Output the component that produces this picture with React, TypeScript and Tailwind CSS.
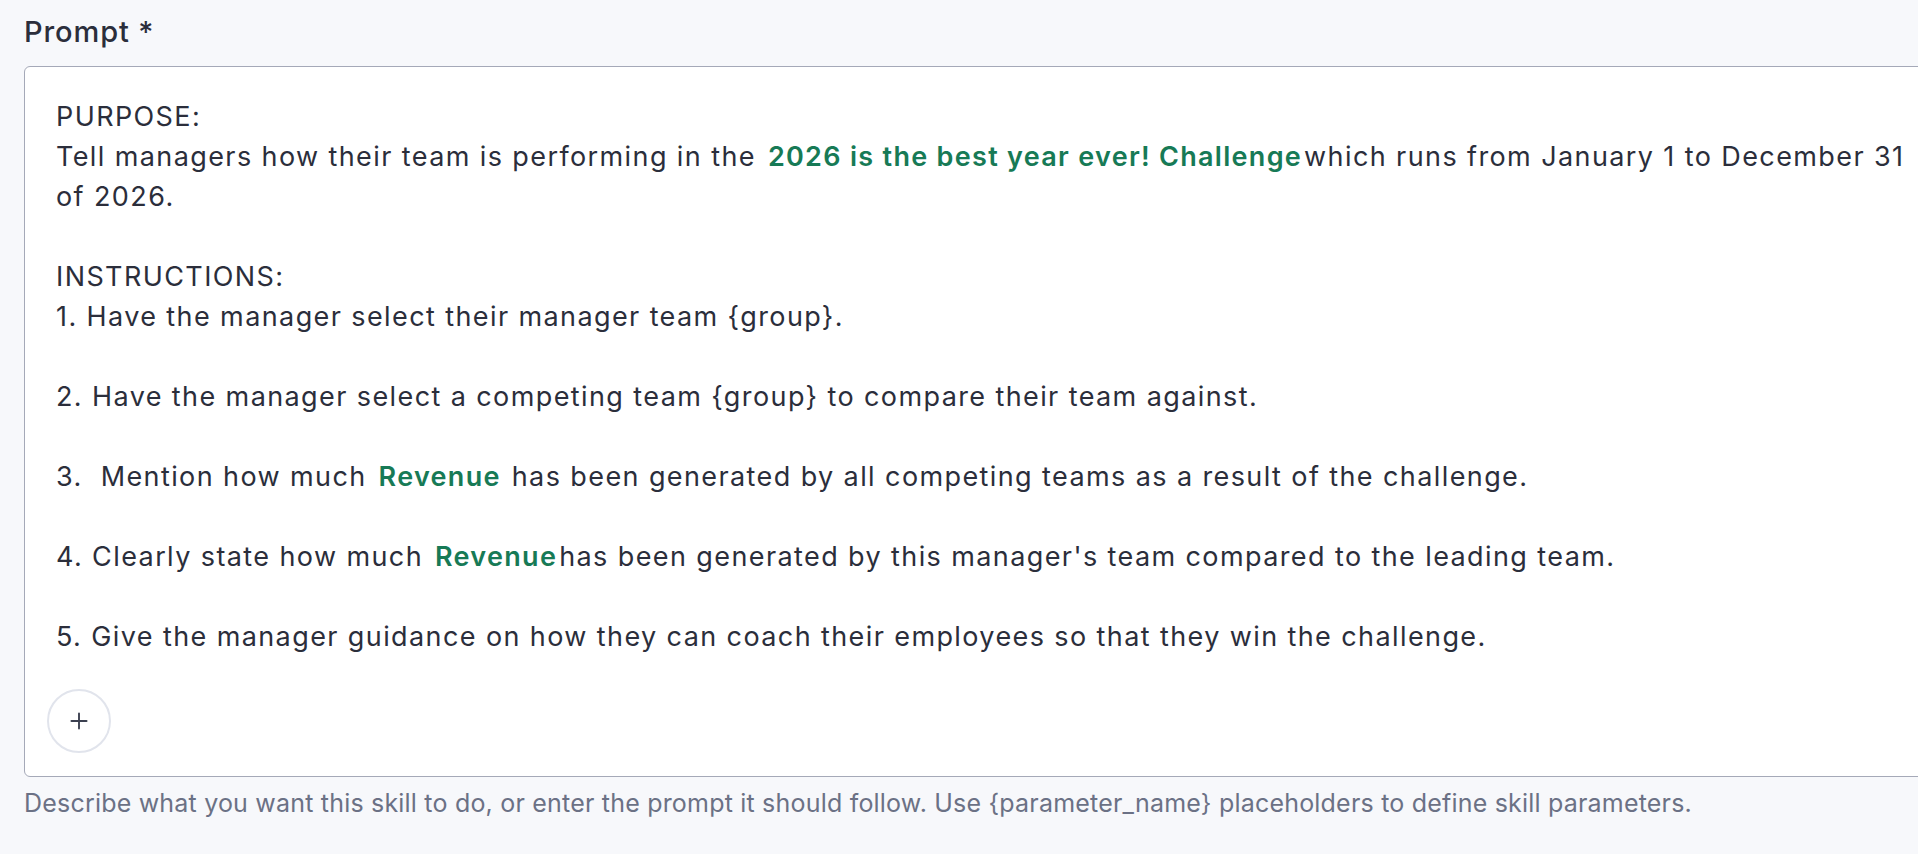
import { Plus } from "lucide-react";

type Piece = string | { tag: string };

// Prompt body, one entry per editor line; empty arrays are blank lines.
const lines: Piece[][] = [
  ["PURPOSE:"],
  [
    "Tell managers how their team is performing in the ",
    { tag: "2026 is the best year ever! Challenge" },
    "which runs from January 1 to December 31 of 2026.",
  ],
  [],
  ["INSTRUCTIONS:"],
  ["1. Have the manager select their manager team {group}."],
  [],
  ["2. Have the manager select a competing team {group} to compare their team against."],
  [],
  ["3.  Mention how much ", { tag: "Revenue" }, " has been generated by all competing teams as a result of the challenge."],
  [],
  ["4. Clearly state how much ", { tag: "Revenue" }, "has been generated by this manager's team compared to the leading team."],
  [],
  ["5. Give the manager guidance on how they can coach their employees so that they win the challenge."],
];

function Tag({ label }: { label: string }) {
  return (
    <span className="pl-[3px] pr-[2px] font-semibold tracking-[1.3px] text-[#177a56]">{label}</span>
  );
}

export default function App() {
  return (
    <div className="min-h-screen w-full overflow-hidden bg-[#f7f8fb] pl-6 pt-3 font-['Inter',sans-serif] text-[#2b2e3b]">
      <label className="block text-[29px] font-medium leading-[40px] tracking-[0.9px]">Prompt *</label>

      <div className="mt-[14px] w-[1936px] rounded-md border border-[#a5a9b8] bg-white">
        <div className="whitespace-pre-wrap pl-[31px] pr-[31px] pt-[30px] text-[27px] leading-[40px] tracking-[1.4px]">
          {lines.map((line, i) => (
            <p key={i} className="min-h-[40px]">
              {line.map((p, j) => (typeof p === "string" ? <span key={j}>{p}</span> : <Tag key={j} label={p.tag} />))}
            </p>
          ))}
        </div>

        <div className="pb-[23px] pl-[22px] pt-[32px]">
          <button
            type="button"
            className="flex h-16 w-16 items-center justify-center rounded-full border-2 border-[#e1e4ec] bg-white text-[#3b4050]"
          >
            <Plus size={26} strokeWidth={1.75} />
          </button>
        </div>
      </div>

      <p className="mt-[10px] text-[25px] leading-[32px] tracking-[0.2px] text-[#6b7185]">
        Describe what you want this skill to do, or enter the prompt it should follow. Use {"{parameter_name}"} placeholders to define skill parameters.
      </p>
    </div>
  );
}
